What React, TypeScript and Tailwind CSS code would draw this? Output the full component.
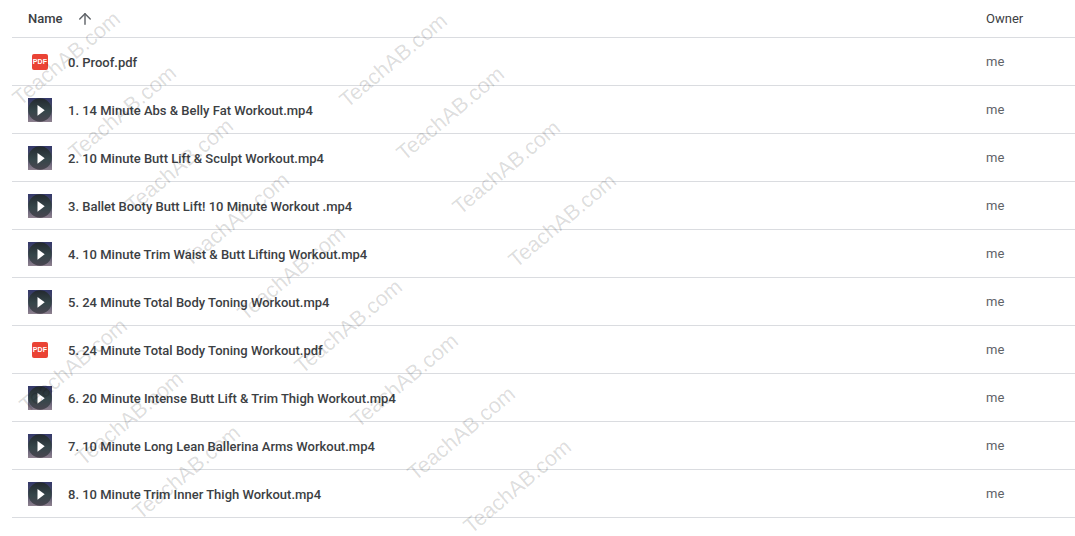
import { ArrowUp } from 'lucide-react';

const files = [
  { name: '0. Proof.pdf', type: 'pdf' },
  { name: '1. 14 Minute Abs & Belly Fat Workout.mp4', type: 'video' },
  { name: '2. 10 Minute Butt Lift & Sculpt Workout.mp4', type: 'video' },
  { name: '3. Ballet Booty Butt Lift! 10 Minute Workout .mp4', type: 'video' },
  { name: '4. 10 Minute Trim Waist & Butt Lifting Workout.mp4', type: 'video' },
  { name: '5. 24 Minute Total Body Toning Workout.mp4', type: 'video' },
  { name: '5. 24 Minute Total Body Toning Workout.pdf', type: 'pdf' },
  { name: '6. 20 Minute Intense Butt Lift & Trim Thigh Workout.mp4', type: 'video' },
  { name: '7. 10 Minute Long Lean Ballerina Arms Workout.mp4', type: 'video' },
  { name: '8. 10 Minute Trim Inner Thigh Workout.mp4', type: 'video' },
];

// centre of every watermark stamp
const stamps = [
  [66.5, 59], [122.5, 113], [179.5, 166], [235.5, 220], [291.5, 274], [348.5, 327], [404.5, 381], [461.5, 434], [517.5, 487],
  [393.5, 61], [450.5, 114], [506.5, 168], [562.5, 221],
  [73.5, 366], [129.5, 419], [186.5, 473],
];

function PdfIcon() {
  return (
    <div className="w-6 h-6 flex items-center justify-center">
      <div className="w-4 h-4 rounded-[2px] bg-[#ea4335] flex items-center justify-center">
        <span className="text-[7px] leading-none font-bold tracking-[0.2px] text-white font-['Liberation_Sans',sans-serif]">PDF</span>
      </div>
    </div>
  );
}

function VideoThumb() {
  return (
    <svg width="24" height="24" viewBox="0 0 24 24" className="block">
      <defs>
        <linearGradient id="thumbBg" x1="0" y1="0" x2="0" y2="1">
          <stop offset="0" stopColor="#34396b" />
          <stop offset="0.45" stopColor="#474a63" />
          <stop offset="1" stopColor="#8f8290" />
        </linearGradient>
        <linearGradient id="thumbDisc" x1="0" y1="0" x2="0" y2="1">
          <stop offset="0" stopColor="#23292f" />
          <stop offset="0.55" stopColor="#35464a" />
          <stop offset="1" stopColor="#4a4650" />
        </linearGradient>
      </defs>
      <rect width="24" height="24" fill="url(#thumbBg)" />
      <circle cx="12" cy="12" r="11.7" fill="url(#thumbDisc)" />
      <path d="M9.5 7L16.7 12.3L9.5 17.7Z" fill="#fff" />
    </svg>
  );
}

export default function App() {
  return (
    <div className="relative w-[1075px] h-[536px] overflow-hidden bg-white font-['Roboto',sans-serif]">
      <div className="pl-3">
        <div className="h-[38px] flex items-center border-b border-[#dadce0] text-[13px] font-medium">
          <div className="flex-1 flex items-center pl-4 text-[#3c4043]">
            <span>Name</span>
            <ArrowUp size={18} strokeWidth={1.9} className="ml-[13px] text-[#5f6368]" />
          </div>
          <div className="w-[89px] text-[#3c4043] font-normal">Owner</div>
        </div>
        {files.map((f) => (
          <div key={f.name} className="h-12 flex items-center border-b border-[#dadce0] text-[13px]">
            <div className="flex-1 flex items-center pl-4">
              {f.type === 'pdf' ? <PdfIcon /> : <VideoThumb />}
              <span className="ml-4 pt-0.5 font-medium text-[#3c4043]">{f.name}</span>
            </div>
            <div className="w-[89px] text-[#5f6368]">me</div>
          </div>
        ))}
      </div>
      {stamps.map(([x, y]) => (
        <div
          key={`${x}-${y}`}
          className="absolute pointer-events-none whitespace-nowrap text-[21.5px] leading-none text-black/[0.14] font-['Liberation_Sans',sans-serif]"
          style={{ left: x, top: y, transform: 'translate(-50%, -50%) rotate(-40deg)' }}
        >
          TeachAB.com
        </div>
      ))}
    </div>
  );
}
